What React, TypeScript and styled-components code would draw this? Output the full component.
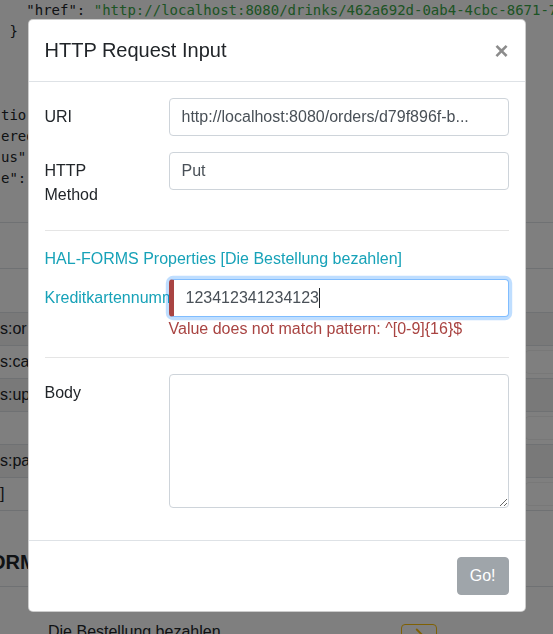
import React from 'react';
import styled, { createGlobalStyle } from 'styled-components';

const GlobalStyle = createGlobalStyle`
  html, body {
    margin: 0;
    padding: 0;
  }
  body {
    font-family: "Liberation Sans", Arial, sans-serif;
    font-size: 16px;
    line-height: 1.5;
    color: #212529;
    background: #fff;
    overflow: hidden;
  }
  *, *::before, *::after {
    box-sizing: border-box;
  }
`;

/* ---------- page behind the dialog ---------- */

const Page = styled.div`
  width: 553px;
  height: 634px;
  overflow: hidden;
`;

const JsonBlock = styled.pre`
  margin: 0;
  padding-left: 1px;
  font-family: "DejaVu Sans Mono", "Liberation Mono", monospace;
  font-size: 14px;
  line-height: 21px;
  white-space: pre;
  color: #212529;
`;

const JsonLine = styled.div`
  height: 21px;
`;

const JsonString = styled.span`
  color: #3aa848;
`;

const LinkTable = styled.div`
  margin-top: 33px;
  border-bottom: 1px solid #dee2e6;
`;

const TableRow = styled.div<{ $height: number; $striped?: boolean }>`
  display: flex;
  align-items: center;
  justify-content: space-between;
  height: ${({ $height }) => $height}px;
  border-top: 1px solid #dee2e6;
  background: ${({ $striped }) => ($striped ? 'rgba(0, 0, 0, 0.05)' : 'transparent')};
`;

const RelCell = styled.span`
  white-space: nowrap;
`;

const RowButton = styled.span`
  width: 40px;
  height: 24px;
  margin-right: -12px;
  border: 1px solid rgba(0, 0, 0, 0.06);
  border-radius: 4px;
`;

const SectionTitle = styled.h5`
  margin: 39px 0 12px;
  font-size: 20px;
  font-weight: 700;
  line-height: 24px;
  white-space: nowrap;
  text-indent: -10px;
`;

const TemplateTable = styled.div`
  border-top: 1px solid #dee2e6;
`;

const TemplateRow = styled.div`
  display: flex;
  align-items: flex-start;
  padding: 33px 0 0 48px;
`;

const TemplateName = styled.span`
  width: 353px;
  white-space: nowrap;
`;

const WarningButton = styled.span`
  display: flex;
  justify-content: center;
  width: 36px;
  height: 31px;
  margin-top: 4px;
  padding-top: 0;
  border: 1px solid #ffc107;
  border-radius: 4px;
  color: #ffc107;
`;

/* ---------- dialog ---------- */

const Backdrop = styled.div`
  position: fixed;
  inset: 0;
  background: rgba(0, 0, 0, 0.5);
`;

const ModalLayer = styled.div`
  position: fixed;
  inset: 0;
  display: flex;
  justify-content: center;
  align-items: flex-start;
  padding-top: 19px;
`;

const Dialog = styled.div`
  width: 498px;
  background: #fff;
  border: 1px solid rgba(0, 0, 0, 0.2);
  border-radius: 5px;
`;

const Header = styled.div`
  display: flex;
  align-items: center;
  padding: 16px;
  border-bottom: 1px solid #dee2e6;
`;

const Title = styled.h5`
  margin: 0;
  font-size: 20px;
  font-weight: 500;
  line-height: 29px;
`;

const CloseButton = styled.button`
  margin: -16px -16px -16px auto;
  padding: 16px;
  border: 0;
  background: transparent;
  font-family: "Liberation Sans", Arial, sans-serif;
  font-size: 24px;
  font-weight: 700;
  line-height: 1;
  color: #000;
  opacity: 0.45;
  text-shadow: 0 1px 0 #fff;
  cursor: pointer;
`;

const Body = styled.div`
  padding: 16px;
`;

const FormRow = styled.div`
  display: flex;
  margin: 0 -15px 16px;
`;

const Label = styled.label<{ $info?: boolean }>`
  flex: 0 0 124px;
  max-width: 124px;
  padding: 7px 15px;
  line-height: 24px;
  white-space: ${({ $info }) => ($info ? 'nowrap' : 'normal')};
  color: ${({ $info }) => ($info ? '#17a2b8' : '#212529')};
`;

const Field = styled.div`
  position: relative;
  flex: 1;
  padding: 0 15px;
`;

const Input = styled.input<{ $invalid?: boolean }>`
  display: block;
  width: 100%;
  height: 38px;
  padding: 6px 12px;
  font-family: "Liberation Sans", Arial, sans-serif;
  font-size: 16px;
  line-height: 24px;
  color: #495057;
  background: #fff;
  border: 1px solid ${({ $invalid }) => ($invalid ? '#80bdff' : '#ced4da')};
  border-left: ${({ $invalid }) => ($invalid ? '5px solid #a94442' : '1px solid #ced4da')};
  border-radius: 4px;
  box-shadow: ${({ $invalid }) => ($invalid ? '0 0 0 3.2px rgba(0, 123, 255, 0.25)' : 'none')};
  text-overflow: ellipsis;
  outline: none;
`;

const Caret = styled.span`
  position: absolute;
  top: 9px;
  left: 165px;
  width: 1px;
  height: 20px;
  background: #212529;
`;

const ErrorText = styled.div`
  line-height: 24px;
  color: #a94442;
  white-space: nowrap;
`;

const Divider = styled.hr`
  margin: 16px 0;
  border: 0;
  border-top: 1px solid rgba(0, 0, 0, 0.1);
`;

const PropertiesTitle = styled.div`
  margin-bottom: 8px;
  line-height: 24px;
  color: #17a2b8;
`;

const TextArea = styled.textarea`
  display: block;
  width: 100%;
  height: 134px;
  padding: 6px 12px;
  font-family: "Liberation Sans", Arial, sans-serif;
  font-size: 16px;
  line-height: 24px;
  color: #495057;
  border: 1px solid #ced4da;
  border-radius: 4px;
  outline: none;
`;

const Footer = styled.div`
  display: flex;
  justify-content: flex-end;
  padding: 16px;
  border-top: 1px solid #dee2e6;
`;

const GoButton = styled.button`
  height: 38px;
  padding: 6px 12px;
  border: 1px solid #6c757d;
  border-radius: 4px;
  background: #6c757d;
  color: #fff;
  font-family: "Liberation Sans", Arial, sans-serif;
  font-size: 16px;
  line-height: 24px;
  opacity: 0.65;
`;

// only the parts of the response body that show beside the dialog
const jsonLines: [string, string][] = [
  ['   "href": ', '"http://localhost:8080/drinks/462a692d-0ab4-4cbc-8671-7d3c'],
  [' }', ''],
  ['', ''],
  ['', ''],
  ['', ''],
  ['tio', ''],
  ['ered', ''],
  ['us"', ''],
  ['e":', ''],
];

const linkRows = [
  { rel: '', height: 46 },
  { rel: '', height: 44 },
  { rel: 's:or', height: 33, striped: true },
  { rel: 's:ca', height: 33, button: true },
  { rel: 's:up', height: 33, striped: true },
  { rel: '', height: 33, button: true },
  { rel: 's:pa', height: 33, striped: true },
  { rel: ']', height: 33, button: true },
];

export default function App() {
  return (
    <>
      <GlobalStyle />
      <Page>
        <JsonBlock>
          {jsonLines.map(([key, value], i) => (
            <JsonLine key={i}>
              {key}
              {value && <JsonString>{value}</JsonString>}
            </JsonLine>
          ))}
        </JsonBlock>

        <LinkTable>
          {linkRows.map((row, i) => (
            <TableRow key={i} $height={row.height} $striped={row.striped}>
              <RelCell>{row.rel}</RelCell>
              {row.button && <RowButton />}
            </TableRow>
          ))}
        </LinkTable>

        <SectionTitle>ORM</SectionTitle>
        <TemplateTable>
          <TemplateRow>
            <TemplateName>Die Bestellung bezahlen</TemplateName>
            <WarningButton>
              <svg width="18" height="18" viewBox="0 0 24 24" fill="none" stroke="currentColor" strokeWidth="2.5" strokeLinecap="round">
                <path d="M9 6l6 6-6 6" />
              </svg>
            </WarningButton>
          </TemplateRow>
        </TemplateTable>
      </Page>

      <Backdrop />
      <ModalLayer>
        <Dialog>
          <Header>
            <Title>HTTP Request Input</Title>
            <CloseButton type="button">×</CloseButton>
          </Header>
          <Body>
            <FormRow>
              <Label>URI</Label>
              <Field>
                <Input readOnly value="http://localhost:8080/orders/d79f896f-b..." />
              </Field>
            </FormRow>
            <FormRow>
              <Label>HTTP Method</Label>
              <Field>
                <Input readOnly value="Put" />
              </Field>
            </FormRow>

            <Divider />
            <PropertiesTitle>HAL-FORMS Properties [Die Bestellung bezahlen]</PropertiesTitle>
            <FormRow>
              <Label $info>Kreditkartennummer</Label>
              <Field>
                <Input $invalid readOnly value="123412341234123" />
                <Caret />
                <ErrorText>Value does not match pattern: ^[0-9]{'{16}'}$</ErrorText>
              </Field>
            </FormRow>

            <Divider />
            <FormRow>
              <Label>Body</Label>
              <Field>
                <TextArea readOnly rows={5} />
              </Field>
            </FormRow>
          </Body>
          <Footer>
            <GoButton type="button" disabled>
              Go!
            </GoButton>
          </Footer>
        </Dialog>
      </ModalLayer>
    </>
  );
}
